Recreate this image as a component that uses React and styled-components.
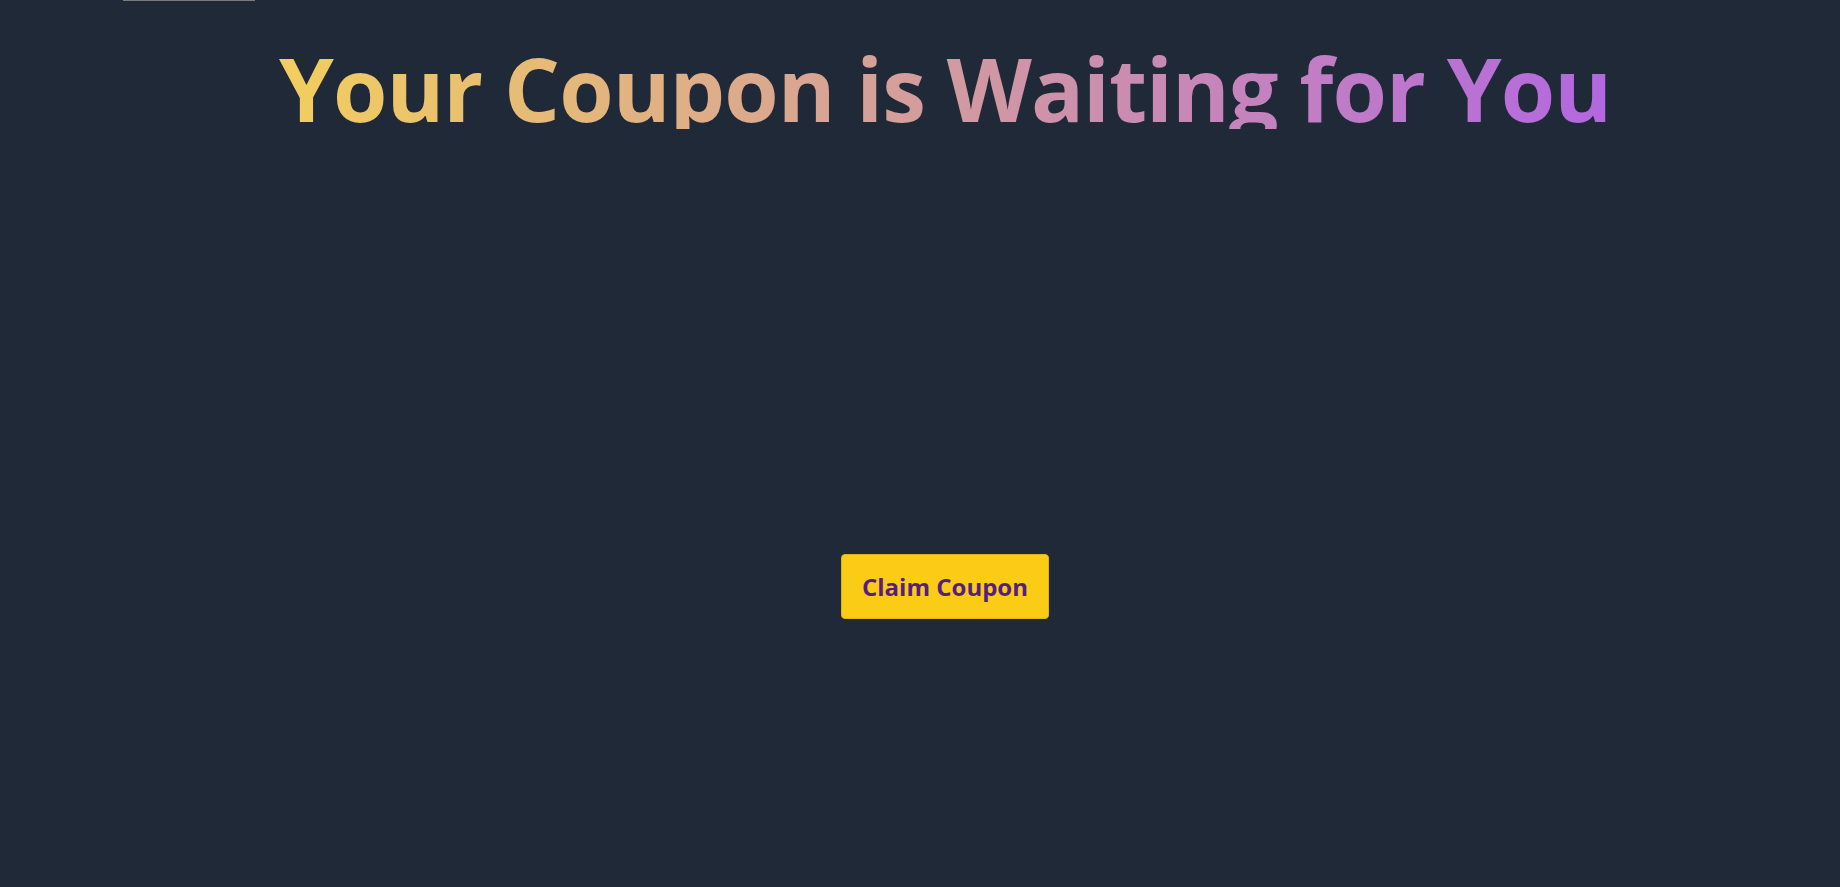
import React from 'react';
import styled, { createGlobalStyle } from 'styled-components';

const GlobalStyle = createGlobalStyle`
  html, body {
    margin: 0;
    padding: 0;
    background: #1f2937;
  }

  body {
    font-family: "Open Sans", "Noto Sans", sans-serif;
    min-height: 100vh;
  }
`;

const Page = styled.div`
  min-height: 100vh;
  background: #1f2937;
  padding-left: 50px;
  box-sizing: border-box;
  position: relative;
`;

// thin strip peeking in at the top edge (rest sits above the viewport)
const TopEdge = styled.div`
  position: absolute;
  top: 0;
  left: 123px;
  width: 132px;
  height: 1px;
  background: #7a7a7a;
`;

const Main = styled.main`
  display: flex;
  flex-direction: column;
  align-items: center;
  padding-top: 47px;
`;

const Title = styled.h1`
  margin: 0;
  width: 100%;
  text-align: center;
  font-size: 88px;
  line-height: 82px;
  font-weight: 700;
  letter-spacing: -1px;
  background: linear-gradient(to right, #fde047, #a855f7);
  -webkit-background-clip: text;
  background-clip: text;
  color: transparent;
  overflow: hidden;
`;

const CouponArea = styled.div`
  height: 425px;
`;

const ClaimButton = styled.button`
  background: #facc15;
  color: #581c87;
  border: 1px solid #e0b510;
  border-radius: 4px;
  padding: 16px 20px;
  font-family: inherit;
  font-size: 24px;
  line-height: 31px;
  font-weight: 700;
  cursor: pointer;

  &:hover {
    background: #eab308;
  }
`;

const App = () => {
  return (
    <>
      <GlobalStyle />
      <Page>
        <TopEdge />
        <Main>
          <Title>Your Coupon is Waiting for You</Title>
          <CouponArea />
          <ClaimButton>Claim Coupon</ClaimButton>
        </Main>
      </Page>
    </>
  );
};

export default App;
